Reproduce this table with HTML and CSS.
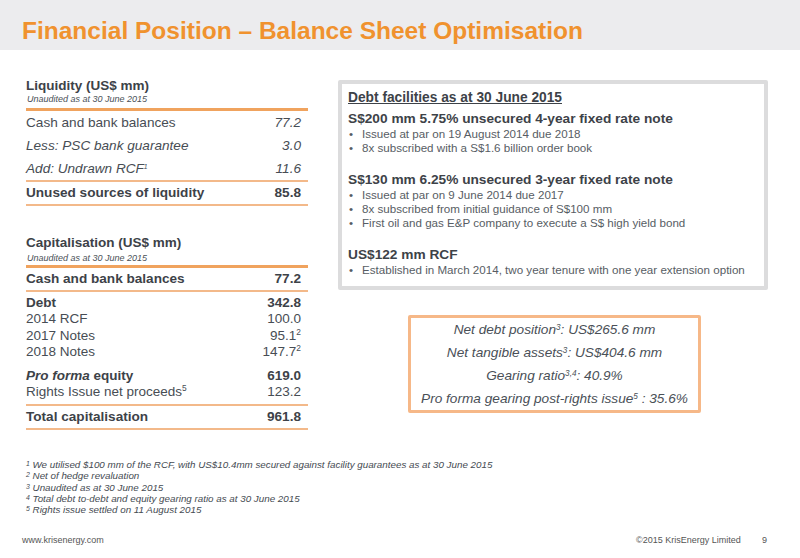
FILE: index.html
```html
<!DOCTYPE html>
<html>
<head>
<meta charset="utf-8">
<link rel="stylesheet" href="styles.css">
</head>
<body>
<header class="header">
  <h1 class="title">Financial Position – Balance Sheet Optimisation</h1>
</header>
<main class="main">
  <section class="left">
    <div class="tbl liq">
      <div class="tbl-head">
        <div class="tbl-title">Liquidity (US$ mm)</div>
        <div class="tbl-sub">Unaudited as at 30 June 2015</div>
      </div>
      <div class="group g-liq">
        <div class="row r-big"><span>Cash and bank balances</span><span class="num it">77.2</span></div>
        <div class="row r-big it"><span>Less: PSC bank guarantee</span><span class="num">3.0</span></div>
        <div class="row r-big it"><span>Add: Undrawn RCF<sup class="tiny">1</sup></span><span class="num">11.6</span></div>
      </div>
      <div class="group">
        <div class="row r-big b"><span>Unused sources of liquidity</span><span class="num">85.8</span></div>
      </div>
    </div>

    <div class="tbl cap">
      <div class="tbl-head">
        <div class="tbl-title">Capitalisation (US$ mm)</div>
        <div class="tbl-sub">Unaudited as at 30 June 2015</div>
      </div>
      <div class="group">
        <div class="row r-big b"><span>Cash and bank balances</span><span class="num">77.2</span></div>
      </div>
      <div class="group g-list">
        <div class="row b"><span>Debt</span><span class="num">342.8</span></div>
        <div class="row"><span>2014 RCF</span><span class="num">100.0</span></div>
        <div class="row"><span>2017 Notes</span><span class="num">95.1<sup>2</sup></span></div>
        <div class="row"><span>2018 Notes</span><span class="num">147.7<sup>2</sup></span></div>
        <div class="row b gap"><span><i>Pro forma</i> equity</span><span class="num">619.0</span></div>
        <div class="row"><span>Rights Issue net proceeds<sup>5</sup></span><span class="num">123.2</span></div>
      </div>
      <div class="group">
        <div class="row r-big b"><span>Total capitalisation</span><span class="num">961.8</span></div>
      </div>
    </div>
  </section>

  <section class="right">
    <div class="facilities">
      <div class="fac-title">Debt facilities as at 30 June 2015</div>
      <div class="fac">
        <div class="fac-h">S$200 mm 5.75% unsecured 4-year fixed rate note</div>
        <ul>
          <li>Issued at par on 19 August 2014 due 2018</li>
          <li>8x subscribed with a S$1.6 billion order book</li>
        </ul>
      </div>
      <div class="fac">
        <div class="fac-h">S$130 mm 6.25% unsecured 3-year fixed rate note</div>
        <ul>
          <li>Issued at par on 9 June 2014 due 2017</li>
          <li>8x subscribed from initial guidance of S$100 mm</li>
          <li>First oil and gas E&amp;P company to execute a S$ high yield bond</li>
        </ul>
      </div>
      <div class="fac">
        <div class="fac-h">US$122 mm RCF</div>
        <ul>
          <li>Established in March 2014, two year tenure with one year extension option</li>
        </ul>
      </div>
    </div>

    <div class="keybox">
      <p>Net debt position<sup>3</sup>: US$265.6 mm</p>
      <p>Net tangible assets<sup>3</sup>: US$404.6 mm</p>
      <p>Gearing ratio<sup>3,4</sup>: 40.9%</p>
      <p>Pro forma gearing post-rights issue<sup>5</sup> : 35.6%</p>
    </div>
  </section>
</main>

<div class="notes">
  <p><sup>1</sup> We utilised $100 mm of the RCF, with US$10.4mm secured against facility guarantees as at 30 June 2015</p>
  <p><sup>2</sup> Net of hedge revaluation</p>
  <p><sup>3</sup> Unaudited as at 30 June 2015</p>
  <p><sup>4</sup> Total debt to-debt and equity gearing ratio as at 30 June 2015</p>
  <p><sup>5</sup> Rights issue settled on 11 August 2015</p>
</div>

<footer class="footer">
  <span class="url">www.krisenergy.com</span>
  <span class="copy">©2015 KrisEnergy Limited</span>
  <span class="page">9</span>
</footer>
</body>
</html>
```

FILE: styles.css
```css
* { box-sizing: border-box; }
html, body { margin: 0; padding: 0; }
body {
  width: 800px;
  height: 558px;
  background: #fff;
  font-family: "Liberation Sans", Arial, sans-serif;
  color: #3d4248;
  position: relative;
  overflow: hidden;
}
.header {
  height: 50px;
  background: #ececee;
  padding: 17px 0 0 22px;
}
.title {
  margin: 0;
  font-size: 24.5px;
  line-height: 27px;
  font-weight: bold;
  color: #f0922e;
}
.main {
  display: flex;
  padding: 0 0 0 26px;
}
.left {
  width: 282px;
  padding-top: 28px;
}
.right {
  padding-left: 30px;
  padding-top: 30px;
}
.tbl-head { padding-bottom: 3px; border-bottom: 3px solid #f0a35e; }
.cap .tbl-head { padding-bottom: 1px; }
.tbl-title { font-weight: bold; font-size: 13.5px; line-height: 16px; }
.tbl-sub { font-style: italic; font-size: 9px; line-height: 11px; padding-left: 1px; color: #4a5057; }
.cap .tbl-sub { line-height: 12px; padding-top: 1px; }
.group { border-bottom: 2px solid #f3b98a; }
.row {
  display: flex;
  justify-content: space-between;
  font-size: 13.6px;
  line-height: 16.3px;
  padding-right: 7px;
  color: #474d54;
}
.r-big { line-height: 22px; }
.g-liq .r-big { line-height: 23px; }
.b { font-weight: bold; color: #3d4248; }
.it { font-style: italic; }
.num { text-align: right; font-style: inherit; }
.row:not(.it) .num.it { font-style: italic; }
sup { font-size: 0.62em; line-height: 0; vertical-align: 0.55em; }
sup.tiny { font-size: 0.5em; }
.cap { margin-top: 29px; }
.g-list { padding: 3px 0 3px; }
.g-list .row { font-size: 13.5px; }
.g-list .gap { margin-top: 8px; }

.facilities {
  width: 430px;
  border: 4px solid #dcdcdd;
  border-radius: 2px;
  padding: 6px 8px 9px 6px;
  background: #fff;
}
.fac-title {
  font-weight: bold;
  font-size: 13.75px;
  line-height: 16px;
  text-decoration: underline;
  color: #3d4248;
}
.fac { margin-top: 5px; }
.fac + .fac { margin-top: 17px; }
.fac-h { font-weight: bold; font-size: 13.7px; line-height: 16px; color: #3d4248; }
.fac ul { margin: 0; padding: 0; list-style: none; }
.fac li {
  font-size: 11.6px;
  line-height: 14px;
  color: #575d64;
  padding-left: 14px;
  position: relative;
}
.fac li::before {
  content: "•";
  position: absolute;
  left: 1px;
  top: 0;
}
.keybox {
  margin: 25px 0 0 70px;
  width: 293px;
  border: 3px solid #f6b888;
  border-radius: 2px;
  padding: 0;
  text-align: center;
  font-style: italic;
  font-size: 13.65px;
  color: #4a5057;
}
.keybox p { margin: 0; line-height: 23px; }
.keybox sup { font-size: 0.6em; vertical-align: 0.45em; }

.notes {
  position: absolute;
  left: 26px;
  top: 459px;
  font-style: italic;
  font-size: 9.8px;
  color: #454b52;
}
.notes p { margin: 0; line-height: 11.25px; }
.notes sup { font-size: 0.7em; vertical-align: 0.3em; }

.footer {
  position: absolute;
  left: 0;
  top: 535px;
  width: 800px;
  font-size: 9px;
  color: #555;
}
.url { position: absolute; left: 22px; }
.copy { position: absolute; left: 636px; }
.page { position: absolute; left: 762px; }
```
